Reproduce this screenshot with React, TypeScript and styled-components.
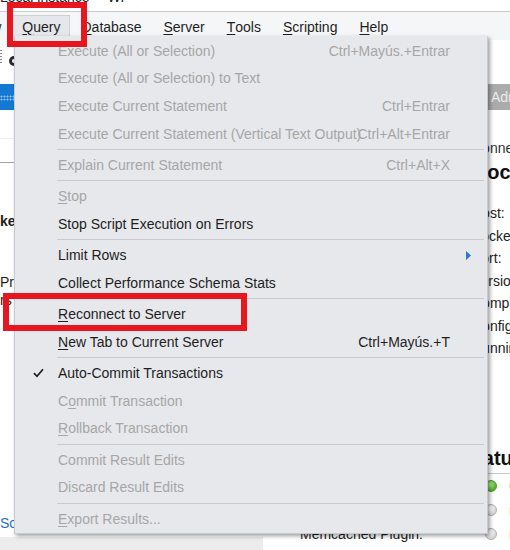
import React from "react";
import styled, { createGlobalStyle } from "styled-components";

const Global = createGlobalStyle`
  html, body { margin: 0; padding: 0; overflow: hidden; background: #fff; }
  body { font-family: "Liberation Sans", Arial, sans-serif; }
  * { box-sizing: border-box; }
`;

const Screen = styled.div`
  position: relative;
  width: 510px;
  height: 550px;
  overflow: hidden;
  background: #fff;
  display: flex;
  flex-direction: column;
  font-size: 14px;
  color: #1e1e1e;
`;

/* ---------- title strip ---------- */
const TitleStrip = styled.div`
  height: 12px;
  flex: none;
  border-bottom: 1px solid #cbcbcb;
  overflow: hidden;
  display: flex;
  gap: 18px;
  background: #fff;
`;
const TitleText = styled.span`
  font-size: 14px;
  line-height: 14px;
  margin-top: -10px;
  color: #202020;
  white-space: nowrap;
`;

/* ---------- menu bar ---------- */
const MenuBar = styled.div`
  height: 28px;
  flex: none;
  display: flex;
  align-items: stretch;
  margin-left: -40px;
  background: #f5f6f7;
`;
const TopItem = styled.div<{ $active?: boolean }>`
  display: flex;
  align-items: center;
  padding: 0 ${(p) => (p.$active ? "9px" : "10px")} 3px;
  margin-top: 3px;
  border: 1px solid ${(p) => (p.$active ? "#cfcfcf" : "transparent")};
  border-bottom: none;
  background: ${(p) => (p.$active ? "#e6e7eb" : "transparent")};
  white-space: nowrap;
`;
const Key = styled.span`
  text-decoration: underline;
  text-underline-offset: 2px;
`;

/* ---------- content under the menu ---------- */
const Content = styled.div`
  flex: 1;
  display: flex;
  min-height: 0;
`;
const LeftPanel = styled.div`
  width: 268px;
  flex: none;
  display: flex;
  flex-direction: column;
`;
const LeftToolbar = styled.div`
  height: 44px;
  display: flex;
  align-items: flex-start;
  padding-top: 10px;
`;
const Grip = styled.div`
  width: 2px;
  height: 14px;
  background-image: linear-gradient(#8a8a8a 50%, transparent 50%);
  background-size: 2px 3px;
`;
const BlueHeader = styled.div`
  height: 26px;
  background: #1479d3;
  padding-top: 11px;
`;
const BlueDots = styled.div`
  height: 6px;
  width: 14px;
  background-image: radial-gradient(circle, rgba(255, 255, 255, 0.55) 0.8px, transparent 1.2px);
  background-size: 3px 3px;
`;
const SideRule = styled.div<{ $h: number; $c: string }>`
  height: ${(p) => p.$h}px;
  border-bottom: 1px solid ${(p) => p.$c};
`;
const SideLine = styled.div<{ $bold?: boolean; $link?: boolean; $mt?: number }>`
  line-height: 18px;
  margin-top: ${(p) => p.$mt ?? 0}px;
  font-weight: ${(p) => (p.$bold ? 700 : 400)};
  color: ${(p) => (p.$link ? "#1a6fd0" : "#1e1e1e")};
  white-space: nowrap;
`;
const Spacer = styled.div`
  flex: 1;
`;
const StatusStrip = styled.div`
  height: 13px;
  margin-top: 5px;
  background: #ececec;
  margin-right: 5px;
`;

const RightPanel = styled.div`
  flex: 1;
  display: flex;
  flex-direction: column;
  min-width: 0;
`;
const TabBar = styled.div`
  margin-top: 44px;
  height: 26px;
  background: #ababab;
  color: #ececec;
  padding-left: 223px;
  line-height: 26px;
  white-space: nowrap;
`;
const InfoBlock = styled.div`
  margin-left: 204px;
  margin-top: 29px;
  white-space: nowrap;
`;
const InfoCaption = styled.div`
  line-height: 18px;
  color: #333;
`;
const InfoTitle = styled.div`
  margin-top: 3px;
  margin-left: 3px;
  line-height: 24px;
  font-size: 20px;
  font-weight: 700;
  color: #111;
`;
const InfoRows = styled.div`
  margin-top: 18px;
`;
const InfoRow = styled.div`
  line-height: 22.5px;
`;
const Features = styled.div`
  margin-left: 32px;
  margin-top: 86px;
  white-space: nowrap;
`;
const FeatureHeading = styled.div`
  font-size: 20px;
  font-weight: 700;
  line-height: 24px;
  padding-bottom: 3px;
  margin-left: -1px;
  border-bottom: 1px solid #c8c8c8;
  color: #111;
`;
const FeatureRow = styled.div`
  display: grid;
  grid-template-columns: 176px 12px auto;
  align-items: center;
  column-gap: 9px;
  line-height: 24px;
`;
const Dot = styled.span<{ $on?: boolean }>`
  width: 12px;
  height: 12px;
  border-radius: 50%;
  background: ${(p) =>
    p.$on
      ? "radial-gradient(circle at 40% 35%, #b6ea8c, #5fb83a 60%, #3f8f22)"
      : "radial-gradient(circle at 40% 35%, #ffffff, #dcdcdc 60%, #b9b9b9)"};
  border: 1px solid ${(p) => (p.$on ? "#4f9b2f" : "#b0b0b0")};
`;
const FeatureState = styled.span`
  margin-left: 3px;
  color: #f2a43a;
`;

/* ---------- dropdown ---------- */
const Dropdown = styled.div`
  position: absolute;
  left: 14px;
  top: 36px;
  width: 474px;
  background: #e7e8ec;
  border: 1px solid #c9cad0;
  border-top-color: #e7e8ec;
  box-shadow: 2px 2px 4px rgba(0, 0, 0, 0.38);
  font-size: 14px;
`;
const Row = styled.div<{ $disabled?: boolean }>`
  display: grid;
  grid-template-columns: 43px minmax(0, 1fr) auto 37px;
  align-items: center;
  height: 27.6px;
  color: ${(p) => (p.$disabled ? "#a6a6a6" : "#1e1e1e")};
  white-space: nowrap;
`;
const CheckCell = styled.span`
  display: flex;
  justify-content: center;
  padding-left: 3px;
`;
const LabelCell = styled.span`
  overflow: visible;
`;
const ShortcutCell = styled.span``;
const ArrowCell = styled.span`
  display: flex;
  justify-content: center;
`;
const Separator = styled.div`
  height: 1px;
  background: #cacbd2;
  margin: 1.4px 3px 1.4px 42px;
`;

const Annotation = styled.div<{ $x: number; $y: number; $w: number; $h: number }>`
  position: absolute;
  left: ${(p) => p.$x}px;
  top: ${(p) => p.$y}px;
  width: ${(p) => p.$w}px;
  height: ${(p) => p.$h}px;
  border: 6px solid #e8161f;
  pointer-events: none;
`;

type MenuEntry =
  | { sep: true }
  | {
      sep?: false;
      label: string;
      key?: number;
      shortcut?: string;
      disabled?: boolean;
      checked?: boolean;
      submenu?: boolean;
    };

const entries: MenuEntry[] = [
  { label: "Execute (All or Selection)", shortcut: "Ctrl+Mayús.+Entrar", disabled: true },
  { label: "Execute (All or Selection) to Text", disabled: true },
  { label: "Execute Current Statement", shortcut: "Ctrl+Entrar", disabled: true },
  { label: "Execute Current Statement (Vertical Text Output)", shortcut: "Ctrl+Alt+Entrar", disabled: true },
  { sep: true },
  { label: "Explain Current Statement", shortcut: "Ctrl+Alt+X", disabled: true },
  { sep: true },
  { label: "Stop", key: 0, disabled: true },
  { label: "Stop Script Execution on Errors" },
  { sep: true },
  { label: "Limit Rows", submenu: true },
  { label: "Collect Performance Schema Stats" },
  { sep: true },
  { label: "Reconnect to Server", key: 0 },
  { label: "New Tab to Current Server", key: 0, shortcut: "Ctrl+Mayús.+T" },
  { sep: true },
  { label: "Auto-Commit Transactions", checked: true },
  { label: "Commit Transaction", key: 1, disabled: true },
  { label: "Rollback Transaction", key: 0, disabled: true },
  { sep: true },
  { label: "Commit Result Edits", disabled: true },
  { label: "Discard Result Edits", disabled: true },
  { sep: true },
  { label: "Export Results...", key: 0, disabled: true },
];

const Mn = ({ text, at }: { text: string; at?: number }) =>
  at === undefined ? (
    <>{text}</>
  ) : (
    <>
      {text.slice(0, at)}
      <Key>{text[at]}</Key>
      {text.slice(at + 1)}
    </>
  );

const CheckIcon = () => (
  <svg width="11" height="10" viewBox="0 0 11 10">
    <path d="M1 5.2 L4 8.3 L10 1.2" fill="none" stroke="#1e1e1e" strokeWidth="1.7" />
  </svg>
);

const ArrowIcon = () => (
  <svg width="5" height="9" viewBox="0 0 5 9">
    <polygon points="0,0 5,4.5 0,9" fill="#2a78d2" />
  </svg>
);

const RingIcon = () => (
  <svg width="12" height="12" viewBox="0 0 12 12" style={{ marginLeft: 6, marginTop: 5 }}>
    <circle cx="6" cy="6" r="5" fill="#2b2b2b" />
    <circle cx="6" cy="6" r="2" fill="#fff" />
  </svg>
);

const topMenu: { label: string; key?: number; active?: boolean }[] = [
  { label: "View", key: 0 },
  { label: "Query", key: 0, active: true },
  { label: "Database", key: 0 },
  { label: "Server", key: 0 },
  { label: "Tools", key: 0 },
  { label: "Scripting", key: 0 },
  { label: "Help", key: 0 },
];

export default function App() {
  return (
    <>
      <Global />
      <Screen>
        <TitleStrip>
          <TitleText>Local instance</TitleText>
          <TitleText>Wi</TitleText>
          <TitleText>×</TitleText>
        </TitleStrip>
        <MenuBar>
          {topMenu.map((m) => (
            <TopItem key={m.label} $active={m.active}>
              <Mn text={m.label} at={m.key} />
            </TopItem>
          ))}
        </MenuBar>
        <Content>
          <LeftPanel>
            <LeftToolbar>
              <Grip />
              <RingIcon />
            </LeftToolbar>
            <BlueHeader>
              <BlueDots />
            </BlueHeader>
            <SideRule $h={29} $c="#eeeeee" />
            <SideRule $h={24} $c="#a5a5a5" />
            <SideLine $bold $mt={49}>
              ke
            </SideLine>
            <SideLine $mt={43}>Pro</SideLine>
            <SideLine>rs</SideLine>
            <Spacer />
            <SideLine $link>Sc</SideLine>
            <StatusStrip />
          </LeftPanel>
          <RightPanel>
            <TabBar>Administration - Server Status</TabBar>
            <InfoBlock>
              <InfoCaption>Connection Name</InfoCaption>
              <InfoTitle>Local instance MySQL80</InfoTitle>
              <InfoRows>
                <InfoRow>Host:</InfoRow>
                <InfoRow>Socket:</InfoRow>
                <InfoRow>Port:</InfoRow>
                <InfoRow>Version:</InfoRow>
                <InfoRow>Compiled For:</InfoRow>
                <InfoRow>Configuration File:</InfoRow>
                <InfoRow>Running Since:</InfoRow>
              </InfoRows>
            </InfoBlock>
            <Features>
              <FeatureHeading>Available Server Features</FeatureHeading>
              <FeatureRow>
                <span>Performance Schema:</span>
                <Dot $on />
                <FeatureState>On</FeatureState>
              </FeatureRow>
              <FeatureRow>
                <span>Thread Pool:</span>
                <Dot />
                <FeatureState>n/a</FeatureState>
              </FeatureRow>
              <FeatureRow>
                <span>Memcached Plugin:</span>
                <Dot />
                <FeatureState>n/a</FeatureState>
              </FeatureRow>
            </Features>
          </RightPanel>
        </Content>

        <Dropdown>
          {entries.map((e, i) =>
            e.sep ? (
              <Separator key={i} />
            ) : (
              <Row key={i} $disabled={e.disabled}>
                <CheckCell>{e.checked ? <CheckIcon /> : null}</CheckCell>
                <LabelCell>
                  <Mn text={e.label} at={e.key} />
                </LabelCell>
                <ShortcutCell>{e.shortcut ?? ""}</ShortcutCell>
                <ArrowCell>{e.submenu ? <ArrowIcon /> : null}</ArrowCell>
              </Row>
            )
          )}
        </Dropdown>

        <Annotation $x={7} $y={2} $w={80} $h={45} />
        <Annotation $x={3} $y={293} $w={244} $h={38} />
      </Screen>
    </>
  );
}
